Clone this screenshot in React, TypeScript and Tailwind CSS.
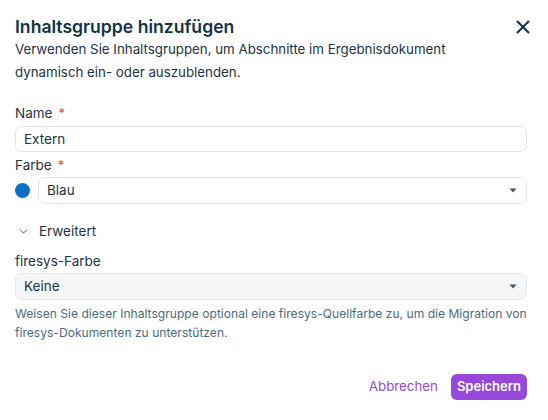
import { X, ChevronDown } from "lucide-react";

function Caret() {
  return (
    <svg width="8" height="5" viewBox="0 0 8 5" className="text-[#3d5566]">
      <path d="M0.5 0.5h7L4 4.5z" fill="currentColor" />
    </svg>
  );
}

function Label({ text, required }: { text: string; required?: boolean }) {
  return (
    <div className="flex items-center text-[13.5px] leading-[20px] text-[#1c3345]">
      {text}
      {required && <span className="ml-[6px] text-[13px] text-[#e0502a]">*</span>}
    </div>
  );
}

export default function App() {
  return (
    <div
      className="h-[420px] w-[548px] overflow-hidden bg-white pl-[15px] pr-[21px] pt-[14px] text-[#1c3345]"
      style={{ fontFamily: "Inter, 'Noto Sans', sans-serif" }}
    >
      <div className="flex items-start justify-between">
        <h2 className="text-[17.6px] leading-[26px] font-semibold text-[#12324a]">
          Inhaltsgruppe hinzufügen
        </h2>
        <button type="button" className="mr-[-7px] mt-[2px] text-[#12324a]">
          <X className="h-[22px] w-[22px]" strokeWidth={2.25} />
        </button>
      </div>
      <p className="mt-[-2px] text-[13.3px] leading-[23px] text-[#1c3345]">
        Verwenden Sie Inhaltsgruppen, um Abschnitte im Ergebnisdokument
        <br />
        dynamisch ein- oder auszublenden.
      </p>

      <div className="mt-[19px]">
        <Label text="Name" required />
        <div className="mt-[3px] flex h-[26px] items-center rounded-[7px] border border-[#dfe3e8] px-[8px] text-[13.5px]">
          Extern
        </div>
      </div>

      <div className="mt-[3px]">
        <Label text="Farbe" required />
        <div className="mt-[2px] flex items-center gap-[8px]">
          <span className="h-[15px] w-[15px] rounded-full bg-[#0a6fc6]" />
          <div className="flex h-[27px] flex-1 items-center justify-between rounded-[7px] border border-[#dfe3e8] pl-[8px] pr-[9px] text-[13.5px]">
            Blau
            <Caret />
          </div>
        </div>
      </div>

      <div className="mt-[17px] flex items-center gap-[9px] text-[13.5px] leading-[20px]">
        <ChevronDown className="ml-[2px] h-[13px] w-[13px] text-[#3d5566]" strokeWidth={1.75} />
        Erweitert
      </div>

      <div className="mt-[10px]">
        <div className="text-[13.5px] leading-[20px]">firesys-Farbe</div>
        <div className="mt-[2px] flex h-[27px] items-center justify-between rounded-[7px] border border-[#e4e7eb] bg-[#f5f6f8] pl-[8px] pr-[9px] text-[13.5px]">
          Keine
          <Caret />
        </div>
        <p className="mt-[4px] whitespace-nowrap text-[12.1px] leading-[19px] text-[#4b6b7c]">
          Weisen Sie dieser Inhaltsgruppe optional eine firesys-Quellfarbe zu, um die Migration von
          <br />
          firesys-Dokumenten zu unterstützen.
        </p>
      </div>

      <div className="mt-[32px] flex items-center justify-end gap-[13px]">
        <button type="button" className="text-[13.3px] text-[#9747d9]">
          Abbrechen
        </button>
        <button
          type="button"
          className="h-[26px] rounded-[6px] bg-[#9747d9] px-[6px] text-[13px] font-semibold text-white"
        >
          Speichern
        </button>
      </div>
    </div>
  );
}
